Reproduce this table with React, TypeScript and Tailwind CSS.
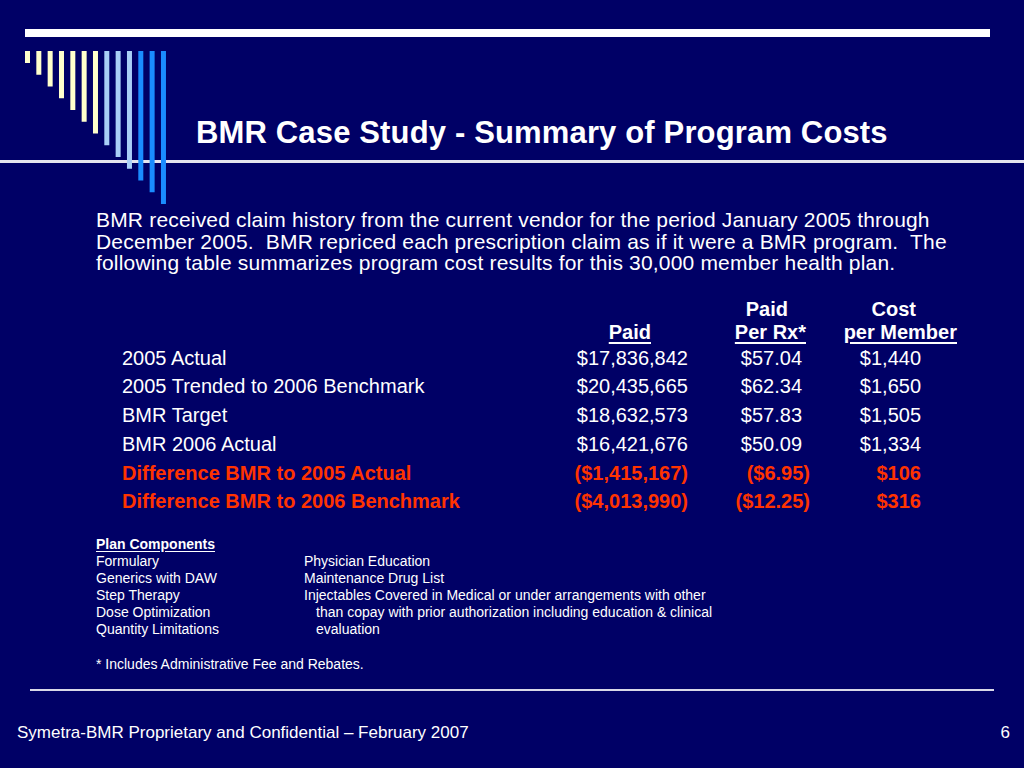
import React from "react";

const bars = Array.from({ length: 13 }, (_, i) => {
  const x = 25 + i * 11.33;
  const bottom = 63 + i * 11.75;
  const color = i < 7 ? "#ffffcc" : i < 10 ? "#a9cff7" : "#1a8cff";
  return { x, bottom, color };
});

type Row = { label: string; paid: string; rx: string; cost: string; red?: boolean };
const rows: Row[] = [
  { label: "2005 Actual", paid: "$17,836,842", rx: "$57.04", cost: "$1,440" },
  { label: "2005 Trended to 2006 Benchmark", paid: "$20,435,665", rx: "$62.34", cost: "$1,650" },
  { label: "BMR Target", paid: "$18,632,573", rx: "$57.83", cost: "$1,505" },
  { label: "BMR 2006 Actual", paid: "$16,421,676", rx: "$50.09", cost: "$1,334" },
  { label: "Difference BMR to 2005 Actual", paid: "($1,415,167)", rx: "($6.95)", cost: "$106", red: true },
  { label: "Difference BMR to 2006 Benchmark", paid: "($4,013,990)", rx: "($12.25)", cost: "$316", red: true },
];

export default function App() {
  return (
    <div
      className="relative w-[1024px] h-[768px] overflow-hidden bg-[#000066] text-white"
      style={{ fontFamily: '"Liberation Sans", Arial, sans-serif' }}
    >
      <svg className="absolute left-0 top-0" width="200" height="220" viewBox="0 0 200 220">
        {bars.map((b, i) => (
          <rect key={i} x={b.x} y={51} width={5} height={b.bottom - 51} fill={b.color} />
        ))}
      </svg>

      <div className="mt-[29px] ml-[25px] w-[965px] h-[8px] bg-white" />

      <div className="mt-[80px] h-[32px] pl-[196px] text-[31px] leading-[32px] font-bold tracking-[0.15px] whitespace-nowrap">
        BMR Case Study - Summary of Program Costs
      </div>

      <div className="mt-[11px] h-[3px] bg-[#e4e4ee]" />

      <p className="mt-[46px] pl-[96px] pr-[40px] text-[21px] leading-[21.5px] tracking-[0.18px]">
        BMR received claim history from the current vendor for the period January 2005 through
        December 2005.&nbsp; BMR repriced each prescription claim as if it were a BMR program.&nbsp; The
        following table summarizes program cost results for this 30,000 member health plan.
      </p>

      <div className="mt-[24px] pl-[122px] text-[20px]">
        <div className="grid grid-cols-[444px_122px_122px_111px] h-[23px] leading-[23px] font-bold">
          <div />
          <div />
          <div className="text-right pr-[22px]">Paid</div>
          <div className="text-right pr-[5px]">Cost</div>
        </div>
        <div className="grid grid-cols-[444px_122px_122px_111px] h-[23px] leading-[23px] font-bold">
          <div />
          <div className="text-right pr-[37px]">
            <span className="underline underline-offset-[3px]">Paid</span>
          </div>
          <div className="text-right pr-[4px]">
            <span className="underline underline-offset-[3px]">Per Rx*</span>
          </div>
          <div className="flex justify-end -mr-[36px]">
            <span className="underline underline-offset-[3px] whitespace-nowrap">per Member</span>
          </div>
        </div>
        {rows.map((r) => (
          <div
            key={r.label}
            className={`grid grid-cols-[444px_122px_122px_111px] h-[28.8px] leading-[28.8px] ${
              r.red ? "text-[#ff3300] font-bold" : ""
            }`}
          >
            <div className="whitespace-nowrap">{r.label}</div>
            <div className="text-right whitespace-nowrap">{r.paid}</div>
            <div className={`text-right whitespace-nowrap ${r.red ? "" : "pr-[8px]"}`}>{r.rx}</div>
            <div className="text-right whitespace-nowrap">{r.cost}</div>
          </div>
        ))}
      </div>

      <div className="mt-[20px] pl-[96px] text-[14px] leading-[17px]">
        <div className="font-bold underline underline-offset-[2px]">Plan Components</div>
        <div className="grid grid-cols-[208px_1fr]">
          <div>Formulary</div>
          <div>Physician Education</div>
          <div>Generics with DAW</div>
          <div>Maintenance Drug List</div>
          <div>Step Therapy</div>
          <div>Injectables Covered in Medical or under arrangements with other</div>
          <div>Dose Optimization</div>
          <div className="pl-[12px]">than copay with prior authorization including education &amp; clinical</div>
          <div>Quantity Limitations</div>
          <div className="pl-[12px]">evaluation</div>
        </div>
        <div className="mt-[18px]">* Includes Administrative Fee and Rebates.</div>
      </div>

      <div className="mt-[16px] ml-[30px] w-[964px] h-[2px] bg-[#d8d8e8]" />

      <div className="mt-[32px] flex justify-between pl-[17px] pr-[14px] text-[17px] leading-[20px]">
        <span>Symetra-BMR Proprietary and Confidential – February 2007</span>
        <span>6</span>
      </div>
    </div>
  );
}
